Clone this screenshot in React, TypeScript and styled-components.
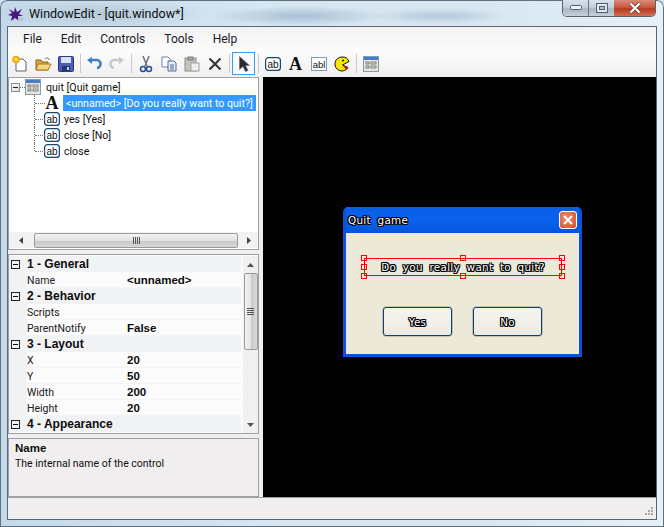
import styled, { createGlobalStyle } from "styled-components";
import { Fragment } from "react";
import type { ReactNode } from "react";

const Global = createGlobalStyle`
  html, body { margin: 0; padding: 0; background: #cfe0ee; }
  * { box-sizing: border-box; }
`;

const Frame = styled.div`
  position: relative;
  width: 664px;
  height: 527px;
  overflow: hidden;
  padding: 0 8px 8px;
  display: flex;
  flex-direction: column;
  font-family: Roboto, "Liberation Sans", sans-serif;
  color: #101010;
  border-radius: 7px 7px 0 0;
  background:
    radial-gradient(ellipse 110px 14px at 100px 14px, #b7c9d6 0%, rgba(183, 201, 214, 0) 100%),
    radial-gradient(ellipse 90px 10px at 300px 16px, #a9c0d4 0%, rgba(169, 192, 212, 0) 100%),
    radial-gradient(ellipse 70px 8px at 440px 16px, #b3c8da 0%, rgba(179, 200, 218, 0) 100%),
    linear-gradient(90deg, #c3d9ea 0%, #d6e6f2 40%, #d8e6f1 70%, #e6f0f7 100%);
  box-shadow: inset 0 0 0 1px #5f6f7c;
`;

const TitleBar = styled.div`
  height: 27px;
  display: flex;
  align-items: flex-start;
`;

const AppIcon = styled.svg`
  width: 16px;
  height: 16px;
  margin: 6px 5px 0 0;
  flex: none;
`;

const TitleText = styled.span`
  font-size: 12.5px;
  line-height: 16px;
  margin-top: 6px;
  color: #0c1014;
  flex: 1;
`;

const CaptionButtons = styled.div`
  display: flex;
  height: 17px;
  border: 1px solid #59636d;
  border-top: none;
  border-radius: 0 0 5px 5px;
  overflow: hidden;
`;

const CaptionButton = styled.div<{ $w: number; $close?: boolean }>`
  width: ${(p) => p.$w}px;
  display: flex;
  align-items: center;
  justify-content: center;
  border-left: ${(p) => (p.$close ? "none" : "1px solid #6c7680")};
  background: ${(p) =>
    p.$close
      ? "linear-gradient(#d98a78 0%, #c85a40 45%, #b83a20 55%, #d26c52 100%)"
      : "linear-gradient(#d6e2ec 0%, #c4d2de 45%, #a9b6c4 55%, #c5d0da 100%)"};
  &:first-child {
    border-left: none;
  }
`;

const Client = styled.div`
  flex: 1;
  min-height: 0;
  display: flex;
  flex-direction: column;
  background: #f0eeee;
  box-shadow: 0 0 0 1px #5b6670;
`;

const MenuBar = styled.div`
  height: 23px;
  display: flex;
  align-items: center;
  gap: 19px;
  padding-left: 15px;
  font-size: 12px;
  background: linear-gradient(#f3f2f2, #fbfbfa);
  color: #1a1a2a;
`;

const Toolbar = styled.div`
  height: 27px;
  display: flex;
  align-items: center;
  background: linear-gradient(#fcfcfb, #f1efef);
`;

const ToolButton = styled.div<{ $active?: boolean }>`
  width: 23px;
  height: 23px;
  display: flex;
  align-items: center;
  justify-content: center;
  flex: none;
  border: ${(p) => (p.$active ? "1px solid #3c9ae8" : "none")};
  background: ${(p) => (p.$active ? "#f7fbfe" : "transparent")};
`;

const ToolSep = styled.div<{ $right: number }>`
  width: 1px;
  height: 19px;
  background: #c9c9cc;
  margin: 0 ${(p) => p.$right}px 0 3px;
  flex: none;
`;

const Main = styled.div`
  height: 420px;
  display: grid;
  grid-template-columns: 251px 393px;
  column-gap: 4px;
`;

const LeftColumn = styled.div`
  display: grid;
  grid-template-rows: 173px 180px 59px;
  row-gap: 4px;
`;

const TreePanel = styled.div`
  border: 1px solid #a0a0a0;
  background: #ffffff;
  display: flex;
  flex-direction: column;
  padding-top: 1px;
`;

const TreeRows = styled.div`
  flex: 1;
`;

const TreeRow = styled.div`
  height: 16px;
  display: flex;
  align-items: center;
  font-size: 10.6px;
  white-space: nowrap;
`;

const Expander = styled.div`
  width: 9px;
  height: 9px;
  margin: 0 0 0 2px;
  border: 1px solid #8e8f8f;
  background: linear-gradient(135deg, #fff, #d8d8d8);
  position: relative;
  flex: none;
  &::after {
    content: "";
    position: absolute;
    left: 1px;
    top: 3px;
    width: 5px;
    height: 1px;
    background: #222;
  }
`;

const RootDots = styled.div`
  width: 5px;
  border-bottom: 1px dotted #777;
  flex: none;
`;

const TreeLine = styled.div<{ $last?: boolean }>`
  width: 10px;
  height: 16px;
  flex: none;
  margin-left: 25px;
  border-left: 1px dotted #777;
  position: relative;
  ${(p) => (p.$last ? "border-left-color: transparent;" : "")}
  &::before {
    content: "";
    position: absolute;
    left: -1px;
    top: 0;
    height: 8px;
    border-left: 1px dotted #777;
  }
  &::after {
    content: "";
    position: absolute;
    left: 0;
    top: 8px;
    width: 10px;
    border-top: 1px dotted #777;
  }
`;

const RootIcon = styled.span`
  display: flex;
  margin-right: 5px;
  flex: none;
`;

const ChildIcon = styled.span`
  width: 16px;
  height: 16px;
  display: flex;
  align-items: center;
  justify-content: center;
  flex: none;
`;

const SerifA = styled.span`
  font-family: "Liberation Serif", serif;
  font-weight: 700;
  font-size: 18px;
  line-height: 16px;
  color: #111;
`;

const NodeLabel = styled.span<{ $selected?: boolean }>`
  margin-left: ${(p) => (p.$selected ? "3px" : "4px")};
  padding: ${(p) => (p.$selected ? "0 3px" : "0")};
  height: 16px;
  line-height: 18px;
  background: ${(p) => (p.$selected ? "#3399ff" : "transparent")};
  color: ${(p) => (p.$selected ? "#ffffff" : "#101010")};
`;

const HScroll = styled.div`
  height: 16px;
  margin: 0 0 1px 0;
  display: flex;
  align-items: center;
  background: #f2f2f2;
`;

const HArrow = styled.div<{ $w: number }>`
  width: ${(p) => p.$w}px;
  display: flex;
  align-items: center;
  justify-content: center;
  flex: none;
`;

const HThumb = styled.div`
  flex: 1;
  height: 15px;
  border: 1px solid #9a9a9a;
  border-radius: 2px;
  background: linear-gradient(#f3f3f3, #e2e2e2 50%, #c9c9c9 55%, #d8d8d8);
  display: flex;
  align-items: center;
  justify-content: center;
  gap: 1px;
`;

const Grip = styled.i<{ $vertical?: boolean }>`
  display: block;
  background: #555;
  width: ${(p) => (p.$vertical ? "7px" : "1px")};
  height: ${(p) => (p.$vertical ? "1px" : "7px")};
`;

const GridPanel = styled.div`
  border: 1px solid #a0a0a0;
  background: #fbfbfb;
  display: flex;
  padding-top: 1px;
  overflow: hidden;
`;

const GridRows = styled.div`
  width: 232px;
  margin-right: 2px;
  flex: none;
`;

const SectionRow = styled.div`
  height: 16px;
  display: flex;
  align-items: center;
  background: #f1f2f4;
  font-family: "Liberation Sans", sans-serif;
  font-size: 12px;
  font-weight: 700;
  color: #0c0c0c;
  white-space: nowrap;
`;

const GridExpander = styled.div`
  width: 9px;
  height: 9px;
  margin: 0 7px 0 2px;
  border: 1px solid #222;
  position: relative;
  flex: none;
  &::after {
    content: "";
    position: absolute;
    left: 1px;
    top: 3px;
    width: 5px;
    height: 1px;
    background: #111;
  }
`;

const PropRow = styled.div`
  height: 16px;
  display: grid;
  grid-template-columns: 18px 100px 1fr;
  align-items: center;
  font-size: 10.5px;
  white-space: nowrap;
  background: #fbfbfb;
  border-bottom: 1px solid #f4f4f4;
`;

const PropMargin = styled.div`
  height: 16px;
  background: #f1f2f4;
`;

const PropName = styled.span`
  color: #202020;
`;

const PropValue = styled.span`
  font-family: "Liberation Sans", sans-serif;
  font-weight: 700;
  font-size: 11.5px;
  color: #0c0c0c;
`;

const VScroll = styled.div`
  width: 15px;
  flex: none;
  background: #f0f0f0;
  display: flex;
  flex-direction: column;
  align-items: center;
`;

const VArrow = styled.div`
  height: 17px;
  width: 100%;
  display: flex;
  align-items: center;
  justify-content: center;
  flex: none;
`;

const VThumb = styled.div`
  width: 14px;
  height: 77px;
  border: 1px solid #9a9a9a;
  border-radius: 2px;
  background: linear-gradient(90deg, #f3f3f3, #e2e2e2 50%, #c9c9c9 55%, #d8d8d8);
  display: flex;
  flex-direction: column;
  align-items: center;
  justify-content: center;
  gap: 1px;
`;

const VSpacer = styled.div`
  flex: 1;
`;

const HelpPanel = styled.div`
  border: 1px solid #a0a0a0;
  background: #f0eeee;
  padding: 2px 0 0 6px;
  font-size: 10.5px;
  line-height: 15px;
`;

const HelpTitle = styled.div`
  font-family: "Liberation Sans", sans-serif;
  font-weight: 700;
  font-size: 11.5px;
`;

const Canvas = styled.div`
  position: relative;
  background: #000;
`;

const GameWindow = styled.div`
  position: absolute;
  left: 80px;
  top: 130px;
  width: 239px;
  height: 150px;
  background: #0a52d8;
  border-radius: 5px 5px 0 0;
  padding: 0 3px 3px;
  display: flex;
  flex-direction: column;
`;

const GameTitleBar = styled.div`
  height: 26px;
  display: flex;
  align-items: center;
  justify-content: space-between;
  padding: 0 2px 0 2px;
  background: linear-gradient(#0a5ee6, #0a62ee 50%, #0555d8);
`;

const OutlineText = styled.span`
  font-family: "DejaVu Sans", sans-serif;
  color: #fff;
  font-size: 10.4px;
  letter-spacing: 0.3px;
  word-spacing: 3px;
  text-shadow:
    1px 0 0 #000, -1px 0 0 #000, 0 1px 0 #000, 0 -1px 0 #000,
    1px 1px 0 #000, -1px 1px 0 #000, 1px -1px 0 #000, -1px -1px 0 #000;
  white-space: nowrap;
`;

const GameClose = styled.div`
  width: 18px;
  height: 18px;
  border: 1px solid #fff;
  border-radius: 3px;
  background: radial-gradient(circle at 40% 35%, #e88a68, #d4502c);
  display: flex;
  align-items: center;
  justify-content: center;
`;

const GameBody = styled.div`
  flex: 1;
  background: #ece9d8;
  position: relative;
`;

const LabelBox = styled.div`
  position: absolute;
  left: 18px;
  top: 25px;
  width: 198px;
  height: 18px;
  box-shadow: inset 0 0 0 1px #f00;
  display: flex;
  align-items: center;
  justify-content: center;
`;

const Handle = styled.i<{ $x: number; $y: number }>`
  position: absolute;
  width: 6px;
  height: 6px;
  border: 1px solid #f00;
  left: calc(${(p) => p.$x}% - 3px);
  top: calc(${(p) => p.$y}% - 3px);
`;

const GameButtons = styled.div`
  position: absolute;
  left: 37px;
  top: 74px;
  display: flex;
  gap: 21px;
`;

const GameButton = styled.div<{ $w: number }>`
  width: ${(p) => p.$w}px;
  height: 29px;
  border: 1px solid #0a3f70;
  border-radius: 3px;
  background: linear-gradient(#f4f3ee, #ecebe3);
  display: flex;
  align-items: center;
  justify-content: center;
  box-shadow: 0 0 0 0.5px #a09a88;
`;

const StatusBar = styled.div`
  flex: 1;
  border-top: 1px solid #a0a0a0;
  background: #f0eeee;
  display: flex;
  justify-content: flex-end;
  align-items: flex-end;
  padding: 0 2px 2px 0;
`;

function Ab() {
  return (
    <svg width="16" height="16" viewBox="0 0 16 16">
      <rect x="0.6" y="1.6" width="14.8" height="12.8" rx="3" fill="#fff" stroke="#17466e" strokeWidth="1.2" />
      <text x="8" y="11.5" fontSize="10" textAnchor="middle" fontFamily="Liberation Sans" fill="#111">ab</text>
    </svg>
  );
}

function FormIcon() {
  return (
    <svg width="16" height="16" viewBox="0 0 16 16">
      <rect x="0.5" y="0.5" width="15" height="15" fill="#e8e6d8" stroke="#7f9db9" />
      <rect x="1" y="1" width="14" height="3" fill="#4a7cc4" />
      <rect x="3" y="6" width="3" height="2" fill="none" stroke="#667" strokeWidth="0.8" />
      <rect x="8" y="6" width="5" height="2" fill="none" stroke="#667" strokeWidth="0.8" />
      <rect x="3" y="10" width="3" height="2" fill="none" stroke="#667" strokeWidth="0.8" />
      <rect x="8" y="10" width="5" height="2" fill="none" stroke="#667" strokeWidth="0.8" />
    </svg>
  );
}

const toolGroups: { right: number; icons: ReactNode[] }[] = [
  {
    right: 1,
    icons: [
      <svg width="18" height="18" viewBox="0 0 18 18" key="new">
        <path d="M5 4h7l3 3v9H5z" fill="#fff" stroke="#5a6570" />
        <circle cx="5" cy="4.500" r="3.800" fill="#f5a800" />
        <circle cx="5" cy="4.500" r="2" fill="#ffe060" />
      </svg>,
      <svg width="18" height="18" viewBox="0 0 18 18" key="open">
        <path d="M2 5h5l1 2h6v8H2z" fill="#d9a63c" stroke="#8a6420" />
        <path d="M4 9h13l-3 6H2z" fill="#f6d67c" stroke="#a87c28" />
        <path d="M11 4c2-2 4-1 4 1" fill="none" stroke="#4a7a30" />
      </svg>,
      <svg width="16" height="16" viewBox="0 0 16 16" key="save">
        <rect x="0.500" y="0.500" width="15" height="15" rx="1" fill="#4a5fb4" stroke="#2c3a80" />
        <rect x="3" y="1" width="10" height="6" fill="#d8e0f4" />
        <rect x="4" y="10" width="8" height="5" fill="#2a356e" />
        <rect x="9" y="11" width="2" height="3" fill="#c8d0e8" />
      </svg>,
    ],
  },
  {
    right: 2,
    icons: [
      <svg width="16" height="16" viewBox="0 0 16 16" key="undo">
        <path d="M5 4h5a4 4 0 0 1 1 8" fill="none" stroke="#3f7fc0" strokeWidth="2.600" />
        <path d="M1 4l5-3v7z" fill="#3f7fc0" />
      </svg>,
      <svg width="16" height="16" viewBox="0 0 16 16" key="redo">
        <path d="M11 4H6a4 4 0 0 0-1 8" fill="none" stroke="#c4c8cc" strokeWidth="2.600" />
        <path d="M15 4l-5-3v7z" fill="#c4c8cc" />
      </svg>,
    ],
  },
  {
    right: 2,
    icons: [
      <svg width="16" height="18" viewBox="0 0 16 18" key="cut">
        <path d="M5 1l4 10M11 1L7 11" stroke="#778" strokeWidth="1.600" />
        <circle cx="5" cy="14" r="2.500" fill="none" stroke="#2a4a9a" strokeWidth="1.500" />
        <circle cx="11" cy="14" r="2.500" fill="none" stroke="#2a4a9a" strokeWidth="1.500" />
      </svg>,
      <svg width="16" height="16" viewBox="0 0 16 16" key="copy">
        <path d="M1 1h6l2 2v8H1z" fill="#fff" stroke="#6a82a8" />
        <path d="M7 5h6l2 2v8H7z" fill="#e4ecf8" stroke="#4a6a98" />
        <path d="M9 9h4M9 11h4M9 13h4" stroke="#4a6a98" />
      </svg>,
      <svg width="16" height="16" viewBox="0 0 16 16" key="paste">
        <rect x="1" y="2" width="11" height="13" fill="#c4c4bc" stroke="#8c8c88" />
        <rect x="4" y="1" width="5" height="3" fill="#a8a8a4" stroke="#808080" />
        <rect x="7" y="7" width="8" height="8" fill="#eee" stroke="#a0a0a0" />
      </svg>,
      <svg width="16" height="16" viewBox="0 0 16 16" key="delete">
        <path d="M2.500 2.500l11 11M13.500 2.500l-11 11" stroke="#3a3a3a" strokeWidth="2.200" />
      </svg>,
    ],
  },
];

export default function App() {
  return (
    <Frame>
      <Global />
      <TitleBar>
        <AppIcon viewBox="0 0 16 16">
          <path d="M1 3l5 3 1-5 2 5 5-3-3 5 4 2-5 0 1 5-4-3-4 3 1-5-4-1 4-2z" fill="#4a1a80" />
          <rect x="10" y="11" width="5" height="4" fill="#b8c4d0" />
        </AppIcon>
        <TitleText>WindowEdit - [quit.window*]</TitleText>
        <CaptionButtons>
          <CaptionButton $w={25}>
            <svg width="12" height="6" viewBox="0 0 12 6">
              <rect x="0.500" y="0.500" width="11" height="4" rx="1" fill="#eef2f6" stroke="#50606e" />
            </svg>
          </CaptionButton>
          <CaptionButton $w={26}>
            <svg width="12" height="10" viewBox="0 0 12 10">
              <rect x="0.500" y="0.500" width="11" height="9" fill="#dfe6ee" stroke="#50606e" />
              <rect x="3.500" y="3.500" width="5" height="3" fill="#b4c0cc" stroke="#50606e" />
            </svg>
          </CaptionButton>
          <CaptionButton $w={41} $close>
            <svg width="14" height="12" viewBox="0 0 14 12">
              <path d="M2.500 1.500l9 9M11.500 1.500l-9 9" stroke="#50302a" strokeWidth="3.600" />
              <path d="M2.500 1.500l9 9M11.500 1.500l-9 9" stroke="#fff" strokeWidth="2.400" />
            </svg>
          </CaptionButton>
        </CaptionButtons>
      </TitleBar>
      <Client>
        <MenuBar>
          <span>File</span>
          <span>Edit</span>
          <span>Controls</span>
          <span>Tools</span>
          <span>Help</span>
        </MenuBar>
        <Toolbar>
          {toolGroups.map((group, i) => (
            <Fragment key={i}>
              {group.icons.map((icon, j) => (
                <ToolButton key={j}>{icon}</ToolButton>
              ))}
              <ToolSep $right={group.right} />
            </Fragment>
          ))}
          <ToolButton $active>
            <svg width="14" height="18" viewBox="0 0 14 18">
              <path d="M2.500 1.500v13l3.500-3 2.500 5 2.500-1-2.500-5h4z" fill="#2c2c30" stroke="#666" strokeWidth="0.600" />
            </svg>
          </ToolButton>
          <ToolSep $right={2} />
          <ToolButton><Ab /></ToolButton>
          <ToolButton><SerifA>A</SerifA></ToolButton>
          <ToolButton>
            <svg width="16" height="16" viewBox="0 0 16 16">
              <rect x="0.500" y="1.500" width="15" height="13" fill="#fff" stroke="#7f9db9" />
              <text x="8" y="11.500" fontSize="9.500" textAnchor="middle" fontFamily="Liberation Sans" fill="#111">abl</text>
            </svg>
          </ToolButton>
          <ToolButton>
            <svg width="16" height="16" viewBox="0 0 16 16">
              <path d="M8 1a7 7 0 1 0 6 10.500L8.500 9 15 5.500A7 7 0 0 0 8 1z" fill="#f8e800" stroke="#111" />
              <path d="M9 9.500l5 2-2 2.500z" fill="#e81818" />
              <circle cx="9" cy="4.500" r="1" fill="#111" />
            </svg>
          </ToolButton>
          <ToolSep $right={2} />
          <ToolButton><FormIcon /></ToolButton>
        </Toolbar>
        <Main>
          <LeftColumn>
            <TreePanel>
              <TreeRows>
                <TreeRow>
                  <Expander />
                  <RootDots />
                  <RootIcon><FormIcon /></RootIcon>
                  <span>quit [Quit game]</span>
                </TreeRow>
                <TreeRow>
                  <TreeLine />
                  <ChildIcon><SerifA>A</SerifA></ChildIcon>
                  <NodeLabel $selected>&lt;unnamed&gt; [Do you really want to quit?]</NodeLabel>
                </TreeRow>
                <TreeRow>
                  <TreeLine />
                  <ChildIcon><Ab /></ChildIcon>
                  <NodeLabel>yes [Yes]</NodeLabel>
                </TreeRow>
                <TreeRow>
                  <TreeLine />
                  <ChildIcon><Ab /></ChildIcon>
                  <NodeLabel>close [No]</NodeLabel>
                </TreeRow>
                <TreeRow>
                  <TreeLine $last />
                  <ChildIcon><Ab /></ChildIcon>
                  <NodeLabel>close</NodeLabel>
                </TreeRow>
              </TreeRows>
              <HScroll>
                <HArrow $w={25}>
                  <svg width="5" height="7" viewBox="0 0 5 7"><path d="M4 0v7L0 3.500z" fill="#444" /></svg>
                </HArrow>
                <HThumb>
                  <Grip /><Grip /><Grip /><Grip />
                </HThumb>
                <HArrow $w={20}>
                  <svg width="5" height="7" viewBox="0 0 5 7"><path d="M1 0v7l4-3.500z" fill="#444" /></svg>
                </HArrow>
              </HScroll>
            </TreePanel>
            <GridPanel>
              <GridRows>
                <SectionRow><GridExpander />1 - General</SectionRow>
                <PropRow><PropMargin /><PropName>Name</PropName><PropValue>&lt;unnamed&gt;</PropValue></PropRow>
                <SectionRow><GridExpander />2 - Behavior</SectionRow>
                <PropRow><PropMargin /><PropName>Scripts</PropName><PropValue /></PropRow>
                <PropRow><PropMargin /><PropName>ParentNotify</PropName><PropValue>False</PropValue></PropRow>
                <SectionRow><GridExpander />3 - Layout</SectionRow>
                <PropRow><PropMargin /><PropName>X</PropName><PropValue>20</PropValue></PropRow>
                <PropRow><PropMargin /><PropName>Y</PropName><PropValue>50</PropValue></PropRow>
                <PropRow><PropMargin /><PropName>Width</PropName><PropValue>200</PropValue></PropRow>
                <PropRow><PropMargin /><PropName>Height</PropName><PropValue>20</PropValue></PropRow>
                <SectionRow><GridExpander />4 - Appearance</SectionRow>
              </GridRows>
              <VScroll>
                <VArrow>
                  <svg width="7" height="4" viewBox="0 0 7 4"><path d="M0 4h7L3.500 0z" fill="#555" /></svg>
                </VArrow>
                <VThumb>
                  <Grip $vertical /><Grip $vertical /><Grip $vertical /><Grip $vertical />
                </VThumb>
                <VSpacer />
                <VArrow>
                  <svg width="7" height="4" viewBox="0 0 7 4"><path d="M0 0h7L3.500 4z" fill="#555" /></svg>
                </VArrow>
              </VScroll>
            </GridPanel>
            <HelpPanel>
              <HelpTitle>Name</HelpTitle>
              The internal name of the control
            </HelpPanel>
          </LeftColumn>
          <Canvas>
            <GameWindow>
              <GameTitleBar>
                <OutlineText>Quit game</OutlineText>
                <GameClose>
                  <svg width="12" height="12" viewBox="0 0 12 12">
                    <path d="M2 2l8 8M10 2l-8 8" stroke="#fff" strokeWidth="2.200" />
                  </svg>
                </GameClose>
              </GameTitleBar>
              <GameBody>
                <LabelBox>
                  <OutlineText>Do you really want to quit?</OutlineText>
                  <Handle $x={0} $y={0} />
                  <Handle $x={50} $y={0} />
                  <Handle $x={100} $y={0} />
                  <Handle $x={0} $y={50} />
                  <Handle $x={100} $y={50} />
                  <Handle $x={0} $y={100} />
                  <Handle $x={50} $y={100} />
                  <Handle $x={100} $y={100} />
                </LabelBox>
                <GameButtons>
                  <GameButton $w={69}><OutlineText>Yes</OutlineText></GameButton>
                  <GameButton $w={69}><OutlineText>No</OutlineText></GameButton>
                </GameButtons>
              </GameBody>
            </GameWindow>
          </Canvas>
        </Main>
        <StatusBar>
          <svg width="10" height="10" viewBox="0 0 10 10" fill="#a8a8a8">
            <rect x="7" y="0" width="2" height="2" />
            <rect x="4" y="3" width="2" height="2" />
            <rect x="7" y="3" width="2" height="2" />
            <rect x="1" y="6" width="2" height="2" />
            <rect x="4" y="6" width="2" height="2" />
            <rect x="7" y="6" width="2" height="2" />
          </svg>
        </StatusBar>
      </Client>
    </Frame>
  );
}
